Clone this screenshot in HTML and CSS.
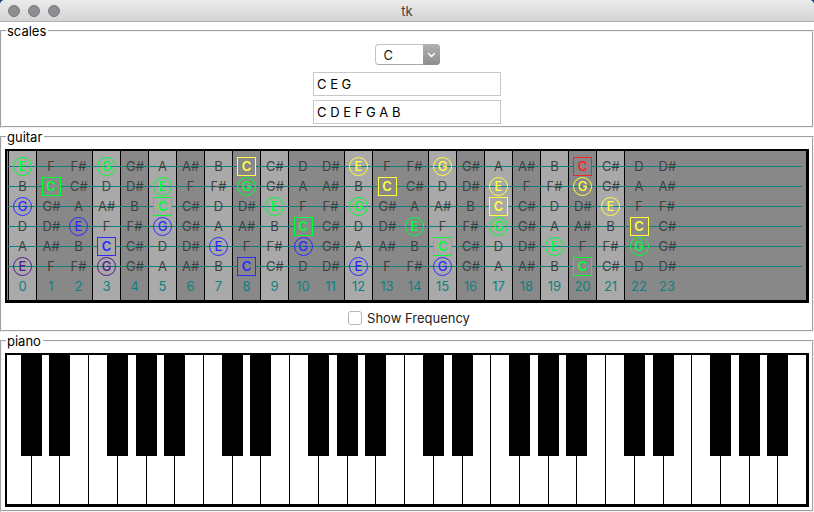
FILE: index.html
```html
<!DOCTYPE html>
<html lang="en">
<head>
<meta charset="utf-8">
<title>tk</title>
<link rel="stylesheet" href="styles.css">
</head>
<body>
<div class="window">
  <header class="titlebar">
    <div class="lights">
      <button class="light" type="button" aria-label="Close"></button>
      <button class="light" type="button" aria-label="Minimize"></button>
      <button class="light" type="button" aria-label="Zoom"></button>
    </div>
    <h1 class="title">tk</h1>
  </header>
  <main class="panels">
    <fieldset class="panel scales">
      <legend>scales</legend>
      <div class="combo">
        <select class="combo-select" aria-label="Root note">
          <option selected>C</option><option>C#</option><option>D</option><option>D#</option>
          <option>E</option><option>F</option><option>F#</option><option>G</option>
          <option>G#</option><option>A</option><option>A#</option><option>B</option>
        </select>
        <svg class="combo-arrow" viewBox="0 0 17 21" aria-hidden="true"><path d="M5.5 9.5l3 3 3-3"/></svg>
      </div>
      <input class="entry" type="text" aria-label="Chord notes" value="C E G">
      <input class="entry" type="text" aria-label="Scale notes" value="C D E F G A B">
    </fieldset>

    <fieldset class="panel guitar">
      <legend>guitar</legend>
      <div class="canvas fretboard">
        <table class="frets" id="frets"></table>
        <div class="string-lines"></div>
      </div>
      <label class="check"><input type="checkbox" class="check-box">Show Frequency</label>
    </fieldset>

    <fieldset class="panel piano">
      <legend>piano</legend>
      <div class="canvas keyboard"><div class="keys" id="keys"></div></div>
    </fieldset>
  </main>
</div>
<script src="script.js"></script>
</body>
</html>
```
FILE: styles.css
```css
* { box-sizing: border-box; }

body {
  margin: 0;
  background: #1d3f78;
  color: #000;
  font: 13px/16px Inter, "Liberation Sans", sans-serif;
}

.window {
  background: #fff;
  border-radius: 5px 5px 0 0;
  overflow: hidden;
}

.titlebar {
  display: grid;
  grid-template-columns: 1fr auto 1fr;
  align-items: center;
  height: 22px;
  padding: 0 8px;
  background: linear-gradient(#ebebeb, #d3d3d3);
  border-bottom: 1px solid #b1b1b1;
}

.lights { display: flex; gap: 8px; }

.light {
  width: 12px;
  height: 12px;
  padding: 0;
  border: 1px solid #7b7a7f;
  border-radius: 50%;
  background: #8e8d92;
}

.title {
  margin: 0;
  font-size: 13px;
  font-weight: 400;
  color: #444;
}

.panels {
  display: grid;
  gap: 1px;
  padding-top: 1px;
}

.panel {
  min-width: 0;
  margin: 0;
  padding: 4px 3px 3px;
  border: 2px groove #f4f4f4;
}

.panel legend {
  height: 16px;
  margin-left: 1px;
  padding: 0 2px 0 1px;
}

.scales {
  display: flex;
  flex-direction: column;
  align-items: center;
  gap: 4px;
  padding: 5px 3px 2px;
}

.combo {
  position: relative;
  width: 65px;
  height: 21px;
  margin-bottom: 3px;
}

.combo-select {
  width: 100%;
  height: 100%;
  padding: 0 20px 0 8px;
  appearance: none;
  border: 1px solid #c2c2c2;
  border-bottom-color: #a9a9a9;
  border-radius: 4px;
  background: #fff;
  color: #222;
  font: inherit;
}

.combo-arrow {
  position: absolute;
  top: 0;
  right: 0;
  width: 17px;
  height: 21px;
  border-radius: 0 4px 4px 0;
  background: linear-gradient(#b2b1b6, #8d8c91);
  fill: none;
  stroke: #fff;
  stroke-width: 1.5;
  stroke-linecap: round;
  stroke-linejoin: round;
  pointer-events: none;
}

.entry {
  width: 188px;
  height: 24px;
  padding: 0 3px;
  border: 1px solid #c8c8c8;
  background: #fff;
  color: #000;
  font: inherit;
}

.canvas {
  border: solid #000;
  border-width: 2px 3px 3px 2px;
  overflow: hidden;
}

.guitar { padding-bottom: 0; }

.fretboard {
  position: relative;
  padding-left: 1px;
  background: #888;
}

.frets {
  width: 673px;
  border-collapse: separate;
  border-spacing: 0;
  table-layout: fixed;
  border-left: 1px solid #000;
}

.frets td,
.frets th {
  height: 20px;
  padding: 0;
  text-align: center;
  vertical-align: bottom;
  font-weight: 400;
  color: #404040;
}

.frets th { color: #0e8080; vertical-align: middle; }
.frets tr:first-child td { height: 25px; }
.frets tr:last-child th { height: 24px; padding-bottom: 4px; }

.frets td { background-color: #888; }
.frets .marked { background-color: #a9a9a9; }
.frets .edge { border-right: 1px solid #000; }

.string-lines {
  position: absolute;
  inset: 5px 4px 24px 1px;
  background: repeating-linear-gradient(transparent 0 10px, #0e8080 10px 11px, transparent 11px 20px);
  pointer-events: none;
}

/* Notes sit above the string lines. */
.note {
  position: relative;
  z-index: 1;
  display: block;
  width: 19px;
  height: 19px;
  margin: 0 auto;
  border: 1px solid transparent;
  line-height: 16px;
}

.hit {
  border-color: currentColor;
  border-radius: 50%;
  font-weight: 500;
}

.root {
  border-radius: 0;
  background: #888;
  font-weight: 600;
}

.marked .root { background: #a9a9a9; }

.octave-2 { color: #551a8b; }
.octave-3 { color: #2f28ff; }
.octave-4 { color: #00ff33; }
.octave-5 { color: #ffff40; }
.octave-6 { color: #ff2020; }

.check {
  display: flex;
  justify-content: center;
  align-items: center;
  gap: 5px;
  height: 27px;
  padding: 2px 0 0 4px;
  color: #222;
}

.check-box {
  appearance: none;
  width: 14px;
  height: 14px;
  margin: 0;
  border: 1px solid #b5b5b5;
  border-radius: 3px;
  background: #fff;
}

.keys {
  display: flex;
  height: 149px;
  margin-left: -5px;
}

.key {
  position: relative;
  flex: 1;
  border-left: 1px solid #000;
}

.black-key {
  position: absolute;
  top: 0;
  left: -11px;
  width: 21px;
  height: 101px;
  background: #000;
}
```
FILE: script.js
```js
const NAMES = ["C", "C#", "D", "D#", "E", "F", "F#", "G", "G#", "A", "A#", "B"];
const OPEN_STRINGS = [64, 59, 55, 50, 45, 40];
const CHORD = ["C", "E", "G"];
const FRETS = 24;
const MARKED = [0, 3, 5, 7, 9, 12, 15, 17, 19, 21];

// Shading and fret wires follow the position markers.
function fretClass(fret) {
  const marked = MARKED.includes(fret);
  const edge = marked || MARKED.includes(fret + 1);
  return [marked && "marked", edge && "edge"].filter(Boolean).join(" ");
}

function noteHtml(midi) {
  const name = NAMES[midi % 12];
  if (!CHORD.includes(name)) return `<span class="note">${name}</span>`;
  const octave = Math.floor(midi / 12) - 1;
  const root = name === CHORD[0] ? " root" : "";
  return `<span class="note hit${root} octave-${octave}">${name}</span>`;
}

const frets = [...Array(FRETS).keys()];
const rows = OPEN_STRINGS.map(open =>
  `<tr>${frets.map(f => `<td class="${fretClass(f)}">${noteHtml(open + f)}</td>`).join("")}</tr>`);
rows.push(`<tr>${frets.map(f => `<th scope="col" class="${fretClass(f)}">${f}</th>`).join("")}</tr>`);
document.getElementById("frets").innerHTML = rows.join("");

// A black key straddles the left edge of these white keys in each octave.
const BLACK_BEFORE = [1, 2, 4, 5, 6];
document.getElementById("keys").innerHTML = [...Array(28).keys()].map(k =>
  `<div class="key">${BLACK_BEFORE.includes(k % 7) ? '<div class="black-key"></div>' : ""}</div>`).join("");
```
